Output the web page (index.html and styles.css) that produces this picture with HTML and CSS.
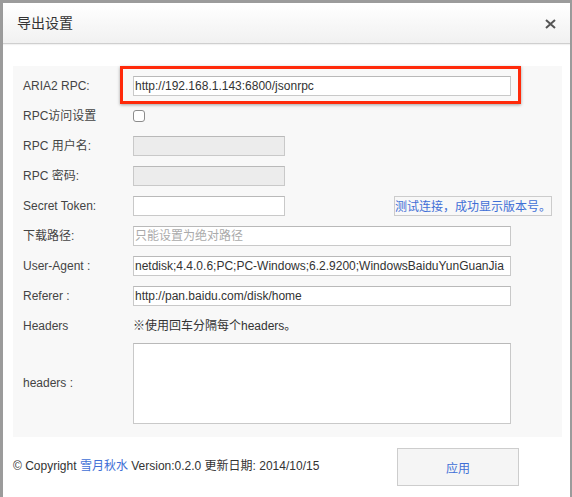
FILE: index.html
```html
<!DOCTYPE html>
<html lang="zh">
<head>
<meta charset="utf-8">
<title>导出设置</title>
<link rel="stylesheet" href="styles.css">
</head>
<body>
<div class="dialog">
  <div class="hd">
    <span class="title">导出设置</span>
    <span class="close"><svg width="11" height="10" viewBox="0 0 11 10"><path d="M1 1 L10 9 M10 1 L1 9" stroke="#555" stroke-width="2" fill="none"/></svg></span>
  </div>
  <div class="panel">
    <div class="row">
      <span class="lbl">ARIA2 RPC:</span>
      <span class="mark"><input class="inp wide" type="text" value="http://192.168.1.143:6800/jsonrpc"></span>
    </div>
    <div class="row">
      <span class="lbl">RPC访问设置</span>
      <input class="chk" type="checkbox">
    </div>
    <div class="row">
      <span class="lbl">RPC 用户名:</span>
      <input class="inp short" type="text" disabled>
    </div>
    <div class="row">
      <span class="lbl">RPC 密码:</span>
      <input class="inp short" type="password" disabled>
    </div>
    <div class="row">
      <span class="lbl">Secret Token:</span>
      <input class="inp short" type="text">
      <button class="test" type="button">测试连接，成功显示版本号。</button>
    </div>
    <div class="row">
      <span class="lbl">下载路径:</span>
      <input class="inp wide" type="text" placeholder="只能设置为绝对路径">
    </div>
    <div class="row">
      <span class="lbl">User-Agent :</span>
      <input class="inp wide" type="text" value="netdisk;4.4.0.6;PC;PC-Windows;6.2.9200;WindowsBaiduYunGuanJia">
    </div>
    <div class="row">
      <span class="lbl">Referer :</span>
      <input class="inp wide" type="text" value="http://pan.baidu.com/disk/home">
    </div>
    <div class="row">
      <span class="lbl">Headers</span>
      <span class="note">※使用回车分隔每个headers。</span>
    </div>
    <div class="row area-row">
      <span class="lbl">headers :</span>
      <textarea class="area"></textarea>
    </div>
  </div>
  <div class="ft">
    <span class="copy">© Copyright <span class="link">雪月秋水</span> Version:0.2.0 更新日期: 2014/10/15</span>
    <button class="apply" type="button">应用</button>
  </div>
</div>
</body>
</html>
```

FILE: styles.css
```css
html, body {
  margin: 0;
  padding: 0;
  height: 100%;
}
body {
  background: #9b9b9b;
  font-family: "Liberation Sans", "Noto Sans CJK SC", sans-serif;
  font-size: 12px;
  line-height: 16px;
  color: #333;
}
.dialog {
  margin: 3px 2px 0 3px;
  height: 494px;
  background: #fff;
  display: flex;
  flex-direction: column;
}
.hd {
  height: 40px;
  border-bottom: 1px solid #cfcfcf;
  box-shadow: 0 1px 1px rgba(0,0,0,0.05);
  background: linear-gradient(#ffffff, #f1f1f1);
  display: flex;
  align-items: center;
  justify-content: space-between;
  padding: 0 14px 0 14px;
}
.title {
  font-size: 14px;
  line-height: 18px;
  color: #333;
}
.close {
  display: flex;
  width: 11px;
  height: 10px;
  margin-top: 1px;
}
.panel {
  margin: 22px 8px 0 10px;
  background: #f8f8f8;
  padding: 10px 10px 13px 10px;
  display: flex;
  flex-direction: column;
  gap: 10px;
}
.row {
  display: flex;
  align-items: center;
  height: 20px;
}
.lbl {
  width: 110px;
  flex: none;
  color: #444;
  line-height: 14px;
  height: 14px;
  margin-top: -1px;
}
.mark {
  position: relative;
  display: flex;
}
.mark::after {
  content: "";
  position: absolute;
  left: -13px;
  top: -10px;
  right: -10px;
  bottom: -8px;
  border: 3px solid #ff2a0a;
  box-shadow: 0 1px 3px rgba(0,0,0,0.35);
  pointer-events: none;
}
.inp {
  box-sizing: border-box;
  height: 20px;
  margin: 0;
  border: 1px solid #c9c9c9;
  border-top-color: #b9b9b9;
  background: #fff;
  padding: 0 1px;
  font-family: "Liberation Sans", "Noto Sans CJK SC", sans-serif;
  font-size: 12px;
  color: #333;
  outline: none;
}
.inp::placeholder {
  color: #aaa;
}
.inp:disabled {
  background: #ececec;
}
.wide {
  width: 378px;
}
.short {
  width: 152px;
}
.chk {
  appearance: none;
  -webkit-appearance: none;
  box-sizing: border-box;
  width: 12px;
  height: 12px;
  margin: 0;
  border: 1px solid #8c8c8c;
  border-radius: 3px;
  background: #fff;
}
.test {
  margin-left: auto;
  box-sizing: border-box;
  height: 20px;
  width: 158px;
  padding: 0;
  border: 1px solid #cccccc;
  background: #f8f8f8;
  color: #3f6fd6;
  font-family: "Noto Sans CJK SC", sans-serif;
  font-size: 12px;
  line-height: 16px;
}
.note {
  color: #333;
  line-height: 14px;
  height: 14px;
}
.area-row {
  height: 81px;
  margin-top: -3px;
}
.area {
  box-sizing: border-box;
  width: 378px;
  height: 81px;
  margin: 0;
  border: 1px solid #c9c9c9;
  border-top-color: #b9b9b9;
  background: #fff;
  resize: none;
  outline: none;
}
.ft {
  display: flex;
  align-items: center;
  justify-content: space-between;
  padding: 11px 51px 0 10px;
}
.copy {
  color: #333;
  line-height: 14px;
  height: 14px;
  margin-top: -2px;
}
.link {
  color: #3f6fd6;
}
.apply {
  box-sizing: border-box;
  width: 122px;
  height: 38px;
  border: 1px solid #cdcdcd;
  background: #f5f5f5;
  color: #3f6fd6;
  font-family: "Noto Sans CJK SC", sans-serif;
  font-size: 12px;
  padding: 0;
}
```
